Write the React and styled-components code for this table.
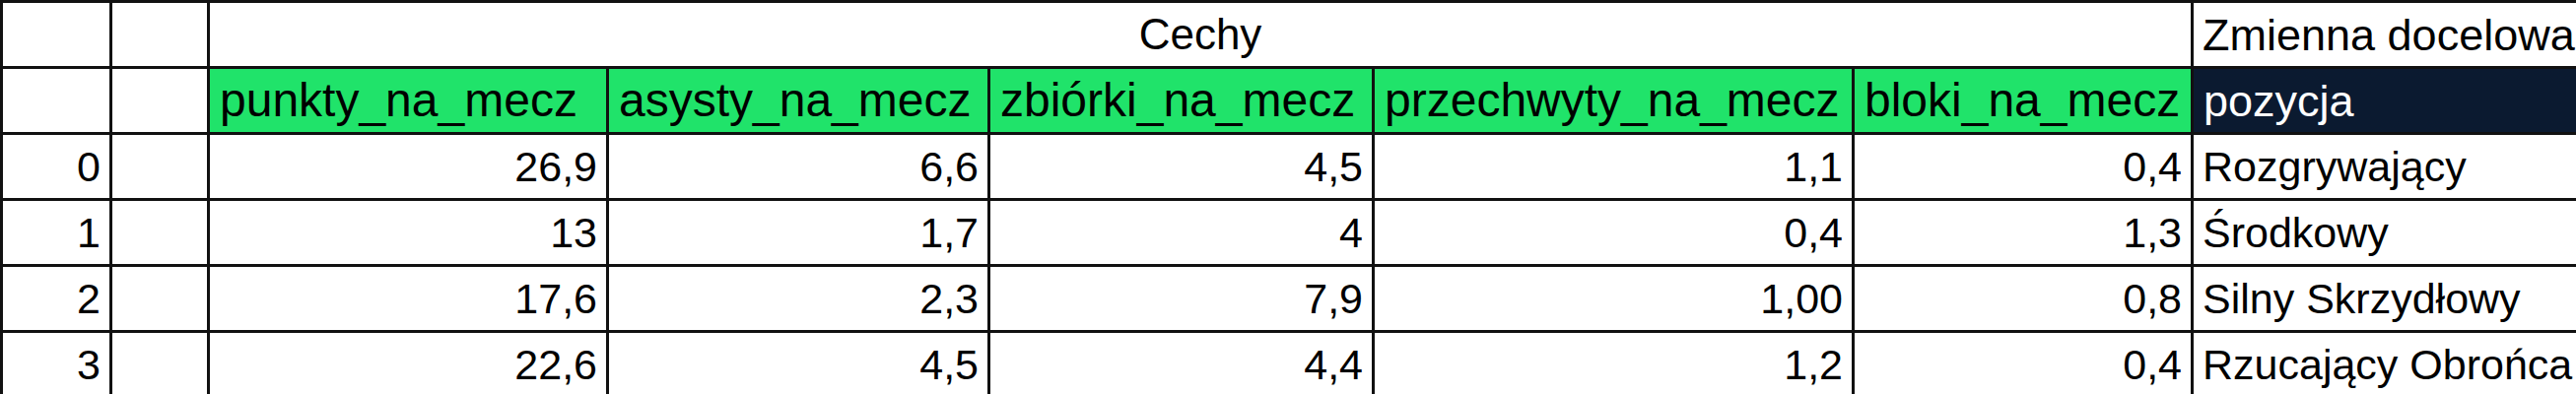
import React from "react";
import styled, { createGlobalStyle } from "styled-components";

const Global = createGlobalStyle`
  html, body { margin: 0; padding: 0; background: #ffffff; overflow: hidden; }
  body { font-family: "Liberation Sans", Arial, sans-serif; color: #000; }
`;

const Sheet = styled.table`
  border-collapse: collapse;
  table-layout: fixed;
  width: 2645px;
  font-family: "Liberation Sans", Arial, sans-serif;
`;

const Row = styled.tr`
  height: 67px;
`;

const Cell = styled.td`
  border: 3px solid #111;
  padding: 0 9px;
  height: 61px;
  font-size: ${(p) => p.$size || 43}px;
  line-height: 1;
  white-space: nowrap;
  overflow: hidden;
  text-align: ${(p) => p.$align || "left"};
  vertical-align: middle;
  background: ${(p) =>
    p.$tone === "green" ? "#20e36a" : p.$tone === "navy" ? "#0b1a30" : "#ffffff"};
  color: ${(p) => (p.$tone === "navy" ? "#ffffff" : "#000000")};
`;

const HeadCell = styled(Cell)`
  padding: 0 6px 0 10px;
`;

const widths = [111, 99, 405, 387, 390, 487, 344, 422];

const features = [
  "punkty_na_mecz",
  "asysty_na_mecz",
  "zbiórki_na_mecz",
  "przechwyty_na_mecz",
  "bloki_na_mecz",
];

const rows = [
  ["26,9", "6,6", "4,5", "1,1", "0,4", "Rozgrywający"],
  ["13", "1,7", "4", "0,4", "1,3", "Środkowy"],
  ["17,6", "2,3", "7,9", "1,00", "0,8", "Silny Skrzydłowy"],
  ["22,6", "4,5", "4,4", "1,2", "0,4", "Rzucający Obrońca"],
];

export default function App() {
  return (
    <>
      <Global />
      <Sheet>
        <colgroup>
          {widths.map((w, i) => (
            <col key={i} style={{ width: w }} />
          ))}
        </colgroup>
        <tbody>
          <Row>
            <Cell />
            <Cell />
            <Cell colSpan={5} $align="center" $size={44}>
              Cechy
            </Cell>
            <Cell $size={45}>Zmienna docelowa</Cell>
          </Row>
          <Row>
            <Cell />
            <Cell />
            {features.map((f) => (
              <HeadCell key={f} $tone="green" $size={48}>
                {f}
              </HeadCell>
            ))}
            <HeadCell $tone="navy" $size={45}>
              pozycja
            </HeadCell>
          </Row>
          {rows.map((r, i) => (
            <Row key={i}>
              <Cell $align="right">{i}</Cell>
              <Cell />
              {r.slice(0, 5).map((v, j) => (
                <Cell key={j} $align="right">
                  {v}
                </Cell>
              ))}
              <Cell>{r[5]}</Cell>
            </Row>
          ))}
        </tbody>
      </Sheet>
    </>
  );
}
